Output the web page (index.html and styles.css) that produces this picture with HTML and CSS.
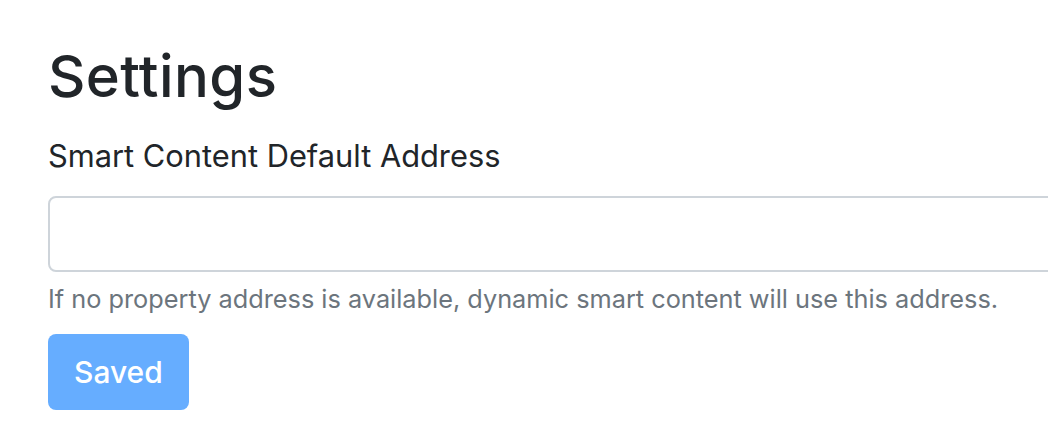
FILE: index.html
```html
<!DOCTYPE html>
<html lang="en">
<head>
<meta charset="utf-8">
<title>Settings</title>
<link rel="stylesheet" href="styles.css">
</head>
<body>
<main class="page">
  <h1 class="title">Settings</h1>
  <form class="settings-form">
    <div class="form-group">
      <label class="field-label" for="address">Smart Content Default Address</label>
      <input class="field-input" id="address" type="text">
      <small class="field-help">If no property address is available, dynamic smart content will use this address.</small>
    </div>
    <button class="btn-saved" type="button" disabled>Saved</button>
  </form>
</main>
</body>
</html>
```
FILE: styles.css
```css
html, body {
  margin: 0;
  padding: 0;
  background: #ffffff;
  overflow: hidden;
}
body {
  font-family: Inter, "Liberation Sans", sans-serif;
  color: #212529;
}
.page {
  padding: 42px 0 0 48px;
}
.title {
  margin: 0 0 22px 0;
  font-size: 58px;
  font-weight: 500;
  line-height: 68px;
  letter-spacing: 0.4px;
}
.settings-form {
  display: flex;
  flex-direction: column;
  align-items: flex-start;
}
.form-group {
  display: flex;
  flex-direction: column;
  align-items: flex-start;
  margin-bottom: 16px;
}
.field-label {
  font-size: 30.8px;
  line-height: 48px;
  margin-bottom: 16px;
}
.field-input {
  box-sizing: border-box;
  width: 1100px;
  height: 76px;
  border: 2px solid #ced4da;
  border-radius: 8px;
  margin: 0;
  padding: 12px 24px;
  font-size: 32px;
  background: #fff;
}
.field-help {
  margin-top: 8px;
  font-size: 25.3px;
  line-height: 38px;
  color: #6c757d;
}
.btn-saved {
  box-sizing: border-box;
  height: 76px;
  padding: 0 24px;
  border: 2px solid transparent;
  border-radius: 8px;
  background: #66adff;
  color: #ffffff;
  font-family: inherit;
  font-size: 30px;
  font-weight: 500;
}
```
